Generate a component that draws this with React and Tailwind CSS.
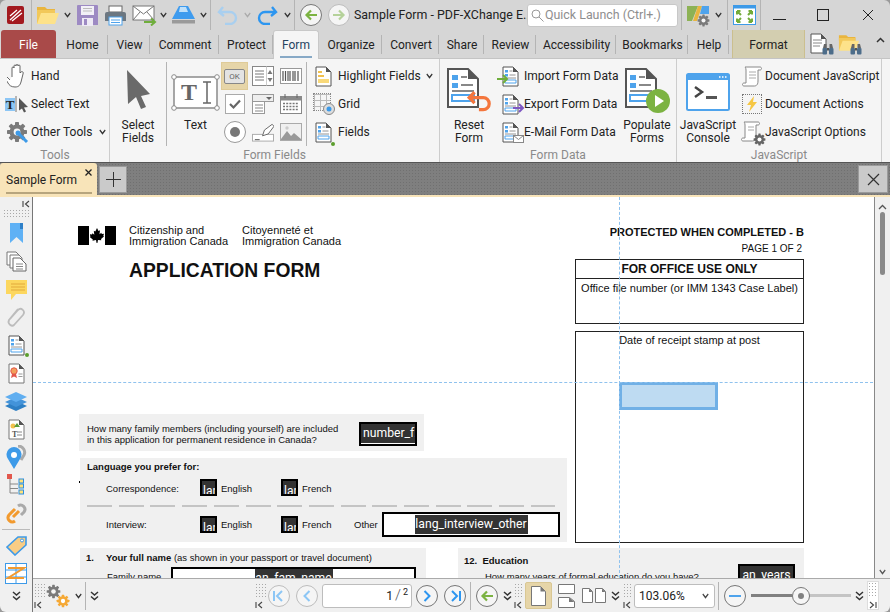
import React from "react";

const Chev = ({ c = "#333", w = 7, cls = "" }) => (
  <svg width={w} height="6" viewBox="0 0 9 6" preserveAspectRatio="none" className={"shrink-0 " + cls}><path d="M1 1l3.5 3.5L8 1" fill="none" stroke={c} strokeWidth="1.600" /></svg>
);
const DblChev = ({ cls = "" }) => (
  <svg width="9" height="10" viewBox="0 0 9 10" className={"shrink-0 " + cls}><path d="M1 1l3.5 3L8 1M1 5.5l3.5 3L8 5.5" fill="none" stroke="#333" strokeWidth="1.500" /></svg>
);
const Collapse = ({ flip = false }) => (
  <svg width="8" height="8" viewBox="0 0 8 8" style={flip ? { transform: "scaleX(-1)" } : undefined}><path d="M1 1v6M7 1L3.5 4 7 7" fill="none" stroke="#444" strokeWidth="1.100" /></svg>
);
const Dots = ({ cls = "" }) => (
  <div className={"bg-[radial-gradient(#a8a8a8_0.8px,transparent_0.9px)] bg-[length:3px_3px] " + cls} />
);
const VSep = ({ cls = "h-[26px]" }) => <div className={"w-px bg-[#b4b4b4] shrink-0 " + cls} />;

const Doc = ({ w = 17, h = 21, children, stroke = "#555" }) => (
  <svg width={w} height={h} viewBox="0 0 17 21">
    <path d="M1 1h10l5 5v14H1z" fill="#fff" stroke={stroke} strokeWidth="1" />
    <path d="M11 1v5h5z" fill="#555" />
    {children}
  </svg>
);
const FormLines = () => (
  <g>
    <path d="M3 4h3v2.5H3zM3 8h3v2.500H3z" fill="#4ea3ec" />
    <path d="M7.500 5h3M7.500 9h6M3 12h11" stroke="#888" strokeWidth="0.900" />
    <path d="M3 14h11v3H3z" fill="#fff" stroke="#4ea3ec" strokeWidth="1" />
  </g>
);

const Folder = ({ w = 24, h = 20 }) => (
  <svg width={w} height={h} viewBox="0 0 24 20" className="shrink-0">
    <path d="M1 2h8l2 2h8v4H1z" fill="#e9b53f" />
    <path d="M1 19V5h18v3" fill="#f2c85a" />
    <path d="M1 19L5 8h18l-4 11z" fill="#fde28a" />
  </svg>
);
const Gear = ({ s = 22, c = "#7a7a7a", hole = "#f5f5f5" }) => (
  <svg width={s} height={s} viewBox="0 0 22 22">
    <g fill={c}>
      {[0, 45, 90, 135].map((a) => <rect key={a} x="9" y="1" width="4" height="20" rx="0.700" transform={`rotate(${a} 11 11)`} />)}
      <circle cx="11" cy="11" r="7.500" />
    </g>
    <circle cx="11" cy="11" r="3.400" fill={hole} />
  </svg>
);
const Binoc = () => (
  <svg width="12" height="12" viewBox="0 0 12 12" className="absolute right-0 bottom-0">
    <path d="M1 5l1-4h2.500v4zM7.500 1H10l1 4H7.500z" fill="#666" />
    <rect x="0.500" y="5" width="4.500" height="6.500" rx="1" fill="#4d6d8a" />
    <rect x="7" y="5" width="4.500" height="6.500" rx="1" fill="#4d6d8a" />
    <rect x="5" y="5" width="2" height="2.500" fill="#555" />
  </svg>
);

const Circ = ({ children, off = false, s = 22 }) => (
  <div style={{ width: s, height: s }} className={"rounded-full border shrink-0 flex items-center justify-center bg-[#f5f5f5] " + (off ? "border-[#bdbdbd]" : "border-[#777]")}>{children}</div>
);
const ArrowL = ({ c }) => (
  <svg width="14" height="12" viewBox="0 0 14 12"><path d="M13 6H3M7 1.500L2.500 6 7 10.500" fill="none" stroke={c} strokeWidth="2.200" /></svg>
);
const ArrowR = ({ c }) => (
  <svg width="14" height="12" viewBox="0 0 14 12"><path d="M1 6h10M7 1.500L11.500 6 7 10.500" fill="none" stroke={c} strokeWidth="2.200" /></svg>
);

function TitleBar() {
  return (
    <div className="h-[30px] flex items-center bg-[#d6d6d6] rounded-t-[6px] text-[12.400px] text-[#222]">
      <div className="w-[31px] pl-[7px] shrink-0">
        <svg width="17" height="18" viewBox="0 0 17 18">
          <rect width="17" height="18" rx="2" fill="#a3191f" />
          <path d="M3 14L14 4M5 15L15 7M3 10l7-6" stroke="#fff" strokeWidth="1.300" />
        </svg>
      </div>
      <VSep cls="h-[30px]" />
      <div className="ml-[4px] shrink-0"><Folder /></div>
      <Chev cls="ml-[4px]" />
      <svg className="ml-[5px] shrink-0" width="23" height="22" viewBox="0 0 23 22">
        <path d="M1 2a1 1 0 011-1h19a1 1 0 011 1v19H1z" fill="#9d8ac3" />
        <rect x="5" y="2" width="13" height="9" fill="#f2f0f7" />
        <path d="M7 4.500h9M7 7h9" stroke="#bbb" />
        <rect x="6" y="14" width="11" height="8" fill="#eeeaf5" />
        <rect x="8" y="15" width="3" height="6" fill="#9d8ac3" />
      </svg>
      <svg className="ml-[5px] shrink-0" width="23" height="21" viewBox="0 0 23 21">
        <rect x="5" y="1" width="13" height="6" fill="#fff" stroke="#666" />
        <path d="M1 9a2 2 0 012-2h17a2 2 0 012 2v7H1z" fill="#6c7781" />
        <rect x="5" y="12" width="13" height="8" fill="#fff" stroke="#4ea3ec" />
        <path d="M7 15h9M7 17.500h9" stroke="#4ea3ec" />
      </svg>
      <svg className="ml-[5px] shrink-0" width="25" height="21" viewBox="0 0 25 21">
        <rect x="1" y="1" width="21" height="14" fill="#fff" stroke="#777" />
        <path d="M1 1l10.500 8L22 1M1 15l7-8M22 15l-7-8" fill="none" stroke="#777" />
        <path d="M12 17h10M19 13.500l4 3.500-4 3.500" fill="none" stroke="#6fae3c" strokeWidth="2" />
      </svg>
      <Chev cls="ml-[3px]" />
      <svg className="ml-[4px] shrink-0" width="25" height="20" viewBox="0 0 25 20">
        <path d="M8 1h9l7 13H1z" fill="#3e9bee" />
        <path d="M9 2h6l2 5H8z" fill="#bfe0fa" />
        <rect x="1" y="15" width="23" height="3.500" fill="#9a9a9a" />
      </svg>
      <Chev cls="ml-[4px]" />
      <VSep cls="h-[30px] ml-[3px]" />
      <svg className="ml-[6px] shrink-0" width="21" height="19" viewBox="0 0 21 19"><path d="M6 1L2 6l5 4M2.500 6H13a6 6 0 010 12H8" fill="none" stroke="#a9cfef" strokeWidth="2.400" /></svg>
      <Chev c="#aaa" cls="ml-[6px]" />
      <svg className="ml-[6px] shrink-0" width="21" height="19" viewBox="0 0 21 19"><path d="M15 1l4 5-5 4M18.500 6H8a6 6 0 000 12h5" fill="none" stroke="#2d96f0" strokeWidth="2.400" /></svg>
      <Chev cls="ml-[6px]" />
      <VSep cls="h-[30px] ml-[3px]" />
      <div className="ml-[5px]"><Circ><ArrowL c="#7cb342" /></Circ></div>
      <div className="ml-[6px]"><Circ off><ArrowR c="#b5d29a" /></Circ></div>
      <span className="ml-[4px] w-[173px] shrink-0 whitespace-nowrap">Sample Form - PDF-XChange E..</span>
      <div className="w-[151px] h-[23px] bg-white border border-[#c8c8c8] rounded-[3px] flex items-center pl-[3px] text-[#8e8e8e] shrink-0">
        <svg width="13" height="13" viewBox="0 0 13 13"><circle cx="5" cy="5" r="4" fill="none" stroke="#999" /><path d="M8 8l4.500 4.500" stroke="#999" /></svg>
        <span className="ml-[1px] whitespace-nowrap">Quick Launch (Ctrl+.)</span>
      </div>
      <VSep cls="h-[30px] ml-[3px]" />
      <svg className="ml-[4px] shrink-0" width="24" height="24" viewBox="0 0 24 24">
        <path d="M1 3h11L6 18H1z" fill="#8db255" />
        <path d="M12 3h4l-5 15H7z" fill="#e9b53f" />
        <path d="M16 3h7v8L14 11z" fill="#4ea3ec" />
        <g transform="translate(11 11)"><Gear s={13} /></g>
      </svg>
      <Chev cls="ml-[5px]" />
      <VSep cls="h-[30px] ml-[5px]" />
      <svg className="ml-[5px] shrink-0" width="23" height="20" viewBox="0 0 23 20">
        <rect x="0.500" y="0.500" width="22" height="19" fill="#fff" stroke="#3d9ae8" />
        <rect x="0.500" y="0.500" width="22" height="3" fill="#3d9ae8" />
        <path d="M4 6l4 4M4 6h3.500M4 6v3.500M19 6l-4 4M19 6h-3.500M19 6v3.500M4 17l4-4M4 17h3.500M4 17v-3.500M19 17l-4-4M19 17h-3.500M19 17v-3.500" fill="none" stroke="#73ab3a" strokeWidth="2" />
      </svg>
      <VSep cls="h-[30px] ml-[4px]" />
      <div className="flex-1 flex items-center">
        <div className="ml-[12px] w-[13px] h-px bg-[#222] mt-[8px]" />
        <div className="ml-[31px] w-[12px] h-[12px] border border-[#222]" />
        <svg className="ml-[33px]" width="12" height="12" viewBox="0 0 12 12"><path d="M1 1l10 10M11 1L1 11" stroke="#222" /></svg>
      </div>
    </div>
  );
}

const tabs = [["Home", 52], ["View", 42], ["Comment", 69], ["Protect", 54]];
const tabs2 = [["Organize", 63], ["Convert", 57], ["Share", 45], ["Review", 52], ["Accessibility", 80], ["Bookmarks", 72], ["Help", 41]];
const Tab = ({ t, w }) => (
  <div style={{ width: w }} className="h-[19px] flex items-center justify-center pl-[2px] border-r border-[#b4b4b4] shrink-0 mb-[4px]">{t}</div>
);

function TabRow() {
  return (
    <div className="h-[29px] flex items-end bg-[#d6d6d6] text-[12px] text-[#222] border-b border-[#c4c4c4]">
      <div className="ml-[1px] w-[55px] h-[28px] bg-[#a94a49] rounded-t-[3px] text-white flex items-center justify-center pt-[1px] shrink-0">File</div>
      {tabs.map(([t, w]) => <Tab key={t} t={t} w={w} />)}
      <div className="w-[46px] h-[29px] -mb-px bg-[#f5f5f5] border border-b-0 border-[#c8c8c8] rounded-t-[3px] flex flex-col items-center justify-center relative shrink-0 text-[#26435f]">
        <span>Form</span>
        <div className="absolute bottom-[1px] left-[6px] right-[6px] h-[2px] bg-[#87a9c6]" />
      </div>
      {tabs2.map(([t, w]) => <Tab key={t} t={t} w={w} />)}
      <div className="ml-[3px] w-[73px] h-[28px] bg-[#d3ceb0] border-x border-[#cbbf8e] flex items-center justify-center pt-[1px] shrink-0">Format</div>
      <div className="relative ml-[5px] w-[24px] h-[22px] mb-[3px] shrink-0"><Doc><path d="M3 7h9M3 10h9M3 13h7" stroke="#888" /></Doc><Binoc /></div>
      <div className="relative ml-[4px] w-[24px] h-[22px] mb-[3px] shrink-0"><Folder w={22} h={19} /><Binoc /></div>
      <svg className="ml-[14px] mb-[15px]" width="9" height="6" viewBox="0 0 9 6"><path d="M1 5l3.500-3.500L8 5" fill="none" stroke="#333" strokeWidth="1.500" /></svg>
    </div>
  );
}

const Row = ({ icon, label, extra, iw = "w-[28px]", cls = "" }) => (
  <div className={"h-[28px] flex items-center whitespace-nowrap " + cls}>
    <div className={"flex items-center justify-center shrink-0 " + iw}>{icon}</div>
    <span>{label}</span>
    {extra}
  </div>
);
const Big = ({ w, lines, icon, cls = "" }) => (
  <div style={{ width: w }} className={"flex flex-col items-center shrink-0 " + cls}>
    <div className="h-[57px] flex items-center justify-center">{icon}</div>
    {lines.map((l) => <span key={l} className="leading-[13px] whitespace-nowrap">{l}</span>)}
  </div>
);
const Group = ({ w, cap, children }) => (
  <div style={{ width: w }} className="h-[103px] flex flex-col border-r border-[#cdcdcd] shrink-0">
    <div className="h-[88px] flex pt-[3px]">{children}</div>
    <div className="flex-1 text-center text-[#8a8a8a] leading-[14px] pt-[1px]">{cap}</div>
  </div>
);
const Cell = ({ children, cls = "" }) => <div className={"h-[28px] flex items-center justify-center " + cls}>{children}</div>;

function Ribbon() {
  return (
    <div className="h-[103px] bg-[#f5f5f5] flex text-[12px] text-[#222] pl-[1px]">
      <Group w={109} cap="Tools">
        <div className="flex flex-col pl-[2px]">
          <Row iw="w-[28px]" label="Hand" icon={
            <svg width="20" height="24" viewBox="0 0 20 24"><path d="M5 13V4a1 1 0 012 0V2a1 1 0 012 0v-.5a1 1 0 012 0V2a1 1 0 012 0v7l1-1c1-1 3 0 2 2l-2 8c-1 3-2 5-6 5s-6-2-7-4l-3-5c-.5-1 1-2 2-1l3 3" fill="#fff" stroke="#555" strokeWidth="0.900" /></svg>
          } />
          <Row label="Select Text" icon={
            <div className="flex items-center">
              <span className="w-[10px] h-[13px] bg-[#8cc6f5] font-['Liberation_Serif',serif] font-bold text-[13px] leading-[13px] text-center">T</span>
              <svg width="14" height="18" viewBox="0 0 14 18"><path d="M1 1v16" stroke="#777" /><path d="M4 3l9 9-4 .5 2 4-2 1-2-4-3 2z" fill="#555" /></svg>
            </div>
          } />
          <Row label="Other Tools" icon={
            <div className="relative w-[22px] h-[22px]"><Gear />
              <svg width="15" height="15" viewBox="0 0 15 15" className="absolute right-[-2px] bottom-[-2px]"><path d="M2 2l10 10" stroke="#3d9ae8" strokeWidth="3" /><circle cx="3" cy="3" r="2.500" fill="#3d9ae8" /></svg>
            </div>
          } extra={<Chev cls="ml-[7px]" />} />
        </div>
      </Group>
      <Group w={330} cap="Form Fields">
        <Big w={56} lines={["Select", "Fields"]} icon={
          <svg className="-mt-[2px]" width="25" height="41" viewBox="0 0 25 41"><path d="M1 1l23 24-9 2 5 11-5 2-5-12-8 7z" fill="#6a6a6a" /></svg>
        } />
        <VSep cls="h-[84px]" />
        <Big w={55} lines={["Text"]} cls="pl-[2px]" icon={
          <svg className="mt-[3px]" width="49" height="37" viewBox="0 0 49 37">
            <rect x="3" y="3" width="43" height="31" fill="#fff" stroke="#8a8a8a" strokeWidth="1.500" />
            {[[3, 3], [46, 3], [3, 34], [46, 34]].map(([x, y]) => <circle key={x + "-" + y} cx={x} cy={y} r="2.300" fill="#fff" stroke="#8a8a8a" />)}
            <text x="18" y="26" textAnchor="middle" fontFamily="Liberation Serif" fontWeight="700" fontSize="24" fill="#666">T</text>
            <path d="M32 8h8M32 29h8M36 8v21" stroke="#666" strokeWidth="1.500" />
          </svg>
        } />
        <div className="flex flex-col w-[31px] -ml-px">
          <div className="h-[28px] w-[27px] bg-[#e6d5a8] flex items-center justify-center border border-[#dfcb98]">
            <div className="w-[21px] h-[15px] bg-[#e3e3e3] border border-[#888] rounded-[2px] text-[8px] leading-[13px] text-center text-[#666]">OK</div>
          </div>
          <Cell cls="w-[27px] h-[28px]">
            <svg width="20" height="20" viewBox="0 0 20 20"><rect x="0.500" y="0.500" width="19" height="19" fill="#fff" stroke="#aaa" /><path d="M5 10l3.500 3.500L15 6.500" fill="none" stroke="#666" strokeWidth="2.200" /></svg>
          </Cell>
          <Cell cls="w-[27px]">
            <svg width="22" height="22" viewBox="0 0 22 22"><circle cx="11" cy="11" r="10.500" fill="#fff" stroke="#999" /><circle cx="11" cy="11" r="5" fill="#777" /></svg>
          </Cell>
        </div>
        <div className="flex flex-col w-[28px]">
          <Cell cls="w-[22px]">
            <svg width="22" height="20" viewBox="0 0 22 20"><rect x="0.500" y="0.500" width="21" height="19" fill="#fff" stroke="#888" /><path d="M3 5h9M3 8h9M3 11h9M3 14h9" stroke="#777" /><path d="M14.500 .5v19" stroke="#ccc" /><path d="M15.500 8l2.500-4 2.500 4zM15.500 12l2.500 4 2.500-4z" fill="#777" /></svg>
          </Cell>
          <Cell cls="w-[22px]">
            <svg width="22" height="20" viewBox="0 0 22 20"><rect x="0.500" y="0.500" width="21" height="7" fill="#eee" stroke="#999" /><path d="M14 3l3 3 3-3z" fill="#666" /><rect x="0.500" y="7.500" width="12" height="12" fill="#fff" stroke="#999" /><path d="M3 11h8M3 14h8M3 17h8" stroke="#888" /></svg>
          </Cell>
          <Cell cls="w-[22px]">
            <svg width="23" height="20" viewBox="0 0 23 20"><rect x="0.500" y="12.500" width="22" height="7" fill="#fff" stroke="#aaa" /><path d="M3 18h5" stroke="#555" /><path d="M11 14l2-6 8-6 2 2-6 8z" fill="#fff" stroke="#666" /></svg>
          </Cell>
        </div>
        <div className="flex flex-col w-[26px]">
          <Cell cls="w-[22px]">
            <svg width="22" height="16" viewBox="0 0 22 16"><rect x="0.500" y="0.500" width="21" height="15" fill="#fff" stroke="#999" /><path d="M3 3v10M5.500 3v10M8 3v10M10 3v10M13 3v10M15 3v10M18 3v10" stroke="#555" strokeWidth="1.200" /></svg>
          </Cell>
          <Cell cls="w-[22px]">
            <svg width="22" height="20" viewBox="0 0 22 20"><rect x="0.500" y="2.500" width="21" height="17" fill="#fff" stroke="#888" /><rect x="0.500" y="2.500" width="21" height="4" fill="#8a8a8a" /><path d="M5 0v4M17 0v4" stroke="#666" /><path d="M3 9.500h16M3 12.500h16M3 15.500h16" stroke="#777" strokeDasharray="2 1.200" strokeWidth="1.500" /></svg>
          </Cell>
          <Cell cls="w-[22px]">
            <svg width="22" height="18" viewBox="0 0 22 18"><rect x="0.500" y="0.500" width="21" height="17" fill="#f0f0f0" stroke="#aaa" /><path d="M1 16l6-8 4 5 3-3 7 6v1H1z" fill="#999" /><circle cx="7" cy="5" r="1.700" fill="#ccc" /></svg>
          </Cell>
        </div>
        <VSep cls="h-[84px]" />
        <div className="flex flex-col pl-[2px] w-[130px]">
          <Row label="Highlight Fields" iw="w-[29px]" icon={<Doc><path d="M3 5h4v2H3zM3 9h6v2H3z" fill="#f2c14e" /><path d="M3 13h11v4H3z" fill="#f9d979" /></Doc>} extra={<Chev cls="ml-[5px]" />} />
          <Row label="Grid" iw="w-[29px]" icon={
            <div className="relative w-[22px] h-[22px]">
              <div className="w-[18px] h-[18px] border border-dotted border-[#888] bg-[linear-gradient(#bbb_1px,transparent_1px),linear-gradient(90deg,#bbb_1px,transparent_1px)] bg-[length:6px_6px]" />
              <svg width="12" height="12" viewBox="0 0 12 12" className="absolute right-0 bottom-0"><circle cx="6" cy="6" r="5.500" fill="#ddd" stroke="#888" /><circle cx="6" cy="6" r="2.500" fill="#3d9ae8" /></svg>
            </div>
          } />
          <Row label="Fields" iw="w-[29px]" icon={
            <div className="relative"><Doc><FormLines /></Doc><div className="absolute right-[-3px] bottom-[-3px] w-[4px] h-[4px] rounded-full bg-[#5b9e2d]" /></div>
          } />
        </div>
      </Group>
      <Group w={237} cap="Form Data">
        <Big w={58} lines={["Reset", "Form"]} icon={
          <div className="relative w-[46px] h-[46px] -mt-[1px]">
            <Doc w={34} h={42}><FormLines /></Doc>
            <svg width="26" height="22" viewBox="0 0 24 20" className="absolute right-[-1px] bottom-0"><path d="M7 1L2 6l5 5M3 6h12a5 5 0 010 11h-4" fill="none" stroke="#f4763d" strokeWidth="3" /></svg>
          </div>
        } />
        <div className="flex flex-col w-[125px] -ml-[1px]">
          <Row label="Import Form Data" iw="w-[27px]" icon={<div className="relative"><Doc><FormLines /></Doc><svg width="12" height="10" viewBox="0 0 12 10" className="absolute left-[-5px] bottom-[3px]"><path d="M0 5h9M6 1l4 4-4 4" fill="none" stroke="#6fae3c" strokeWidth="2" /></svg></div>} />
          <Row label="Export Form Data" iw="w-[27px]" icon={<div className="relative"><Doc><FormLines /></Doc><svg width="12" height="10" viewBox="0 0 12 10" className="absolute right-[-6px] bottom-[2px]"><path d="M0 5h9M6 1l4 4-4 4" fill="none" stroke="#7e57c2" strokeWidth="2" /></svg></div>} />
          <Row label="E-Mail Form Data" iw="w-[27px]" icon={<div className="relative"><Doc><FormLines /></Doc><svg width="11" height="8" viewBox="0 0 11 8" className="absolute right-[-5px] bottom-0"><rect x="0.500" y="0.500" width="10" height="7" fill="#fff" stroke="#888" /><path d="M.5.5l5 4 5-4" fill="none" stroke="#888" /></svg></div>} />
        </div>
        <Big w={50} lines={["Populate", "Forms"]} icon={
          <div className="relative w-[46px] h-[46px] -mt-[1px]">
            <Doc w={34} h={42}><FormLines /></Doc>
            <svg width="24" height="24" viewBox="0 0 24 24" className="absolute right-0 bottom-0"><circle cx="12" cy="12" r="12" fill="#7cb342" /><path d="M9 6l9 6-9 6z" fill="#fff" /></svg>
          </div>
        } />
      </Group>
      <Group w={205} cap="JavaScript">
        <Big w={62} lines={["JavaScript", "Console"]} icon={
          <svg className="mt-[2px]" width="44" height="38" viewBox="0 0 44 38">
            <rect x="1" y="1" width="42" height="36" rx="1.500" fill="#fff" stroke="#4ea3ec" strokeWidth="2" />
            <rect x="1" y="1" width="42" height="6" fill="#4ea3ec" />
            <path d="M33 4h1.500M36 4h1.500M39 4h1.500" stroke="#fff" strokeWidth="1.500" />
            <path d="M9 14l7 5-7 5" fill="none" stroke="#444" strokeWidth="2.500" />
            <path d="M20 24.500h11" stroke="#555" strokeWidth="3" />
          </svg>
        } />
        <div className="flex flex-col">
          <Row label="Document JavaScript" iw="w-[26px]" icon={
            <svg width="22" height="21" viewBox="0 0 22 21"><path d="M4 1h15c2 0 2 3 0 3h-2v11c0 5-3 5-4 5H3c-2 0-2-3 0-3h2V4C5 2 4 1 4 1z" fill="#fff" stroke="#888" /><path d="M8 6h7M8 9h7M8 12h7" stroke="#aaa" /></svg>
          } />
          <Row label="Document Actions" iw="w-[26px]" icon={
            <div className="w-[20px] h-[20px] border border-dotted border-[#777] flex items-center justify-center">
              <svg width="12" height="16" viewBox="0 0 12 16"><path d="M8 0L1 9h4l-2 7 8-10H7z" fill="#f6c744" /></svg>
            </div>
          } />
          <Row label="JavaScript Options" iw="w-[26px]" icon={
            <div className="relative w-[22px] h-[22px]">
              <svg width="20" height="21" viewBox="0 0 20 21"><path d="M3 1h14c2 0 2 3 0 3h-2v11c0 5-3 5-4 5H2c-2 0-2-3 0-3h2V4C4 2 3 1 3 1z" fill="#fff" stroke="#888" /><path d="M7 6h6M7 9h6" stroke="#aaa" /></svg>
              <div className="absolute right-[-3px] bottom-[-3px]"><Gear s={13} c="#666" hole="#fff" /></div>
            </div>
          } />
        </div>
      </Group>
    </div>
  );
}

function DocTabs() {
  return (
    <div className="h-[33px] flex items-start bg-[#7f7f7f] border-t border-[#555] bg-[radial-gradient(#707070_0.7px,transparent_0.8px)] bg-[length:3px_3px] text-[12px]">
      <div className="relative w-[97px] h-[32px] bg-[#f8e4b9] rounded-t-[3px] flex items-start pl-[6px] pt-[8px] text-[#222] shrink-0">
        <span>Sample Form</span>
        <svg width="7" height="7" viewBox="0 0 7 7" className="absolute right-[5px] top-[6px]"><path d="M.5.5l6 6M6.500.5l-6 6" stroke="#222" strokeWidth="1.300" /></svg>
        <div className="absolute left-[6px] right-[5px] bottom-[1px] h-[2px] bg-[#b7a57e]" />
      </div>
      <div className="ml-[2px] mt-[3px] w-[28px] h-[27px] bg-[#cacaca] border border-[#9b9b9b] flex items-center justify-center">
        <svg width="15" height="15" viewBox="0 0 15 15"><path d="M7.500 0v15M0 7.500h15" stroke="#333" /></svg>
      </div>
      <div className="flex-1" />
      <div className="mr-[2px] mt-[2px] w-[30px] h-[28px] bg-[#cacaca] border border-[#9b9b9b] flex items-center justify-center">
        <svg width="13" height="13" viewBox="0 0 13 13"><path d="M1 1l11 11M12 1L1 12" stroke="#333" strokeWidth="1.200" /></svg>
      </div>
    </div>
  );
}

const sideIcons = [
  <svg width="15" height="20" viewBox="0 0 15 20"><path d="M1 0h13v20l-6.500-6L1 20z" fill="#5fb1f5" /><path d="M11 0h3v6h-3z" fill="#2e80c8" /></svg>,
  <svg width="21" height="21" viewBox="0 0 21 21"><path d="M1 1h9l3 3v10H1z" fill="#fff" stroke="#777" /><path d="M4 4h9l3 3v10H4z" fill="#fff" stroke="#777" /><path d="M7 7h7l6 6v7H7z" fill="#fff" stroke="#666" /><path d="M10 13h7M10 15.500h7M10 18h7" stroke="#888" /></svg>,
  <svg width="22" height="21" viewBox="0 0 22 21"><path d="M1 1h21v14H11l-5 6v-6H1z" fill="#fcd75f" /><path d="M6 5h14M6 8h14M6 11h14" stroke="#e2a93c" /></svg>,
  <svg width="23" height="22" viewBox="0 0 23 22"><path d="M5 13l8-9c3-3 8 1 5 5l-9 10c-2 2-7-1-5-5l9-11" fill="none" stroke="#bcbcbc" strokeWidth="1.800" /></svg>,
  <div className="relative"><Doc><FormLines /></Doc><div className="absolute right-[-4px] bottom-[-1px] w-[4px] h-[4px] rounded-full bg-[#5b9e2d]" /></div>,
  <Doc stroke="#777"><circle cx="6" cy="8" r="3.200" fill="#f3a05a" stroke="#e2574c" /><path d="M4 11l-1 4 3-1.500L9 15l-1-4" fill="#e2574c" /><path d="M10.500 11h4M10.500 13.500h4" stroke="#999" /></Doc>,
  <svg width="22" height="19" viewBox="0 0 22 19"><path d="M11 9l11 5-11 5L0 14z" fill="#2e7fc4" /><path d="M11 5l11 5-11 5L0 10z" fill="#4393d9" /><path d="M11 0l11 5-11 5L0 5z" fill="#60aef0" /></svg>,
  <Doc stroke="#777"><circle cx="5" cy="7" r="2.500" fill="#f2c14e" /><path d="M6 8l3-4 3 4z" fill="#5d9c3a" /><text x="4" y="18" fontFamily="Liberation Serif" fontWeight="700" fontSize="8" fill="#555">T</text><path d="M9 13h5M9 16h5" stroke="#888" /></Doc>,
  <svg width="21" height="24" viewBox="0 0 21 24"><path d="M12 1c5 0 8 5 6 9l-3 5" fill="none" stroke="#aaa" strokeWidth="3" /><path d="M8 24L2 14a7.500 7.500 0 1112 0z" fill="#3d9ae8" /><circle cx="8" cy="10" r="3" fill="#fff" /></svg>,
  <svg width="18" height="22" viewBox="0 0 18 22"><rect x="0" y="0" width="5" height="5" fill="#e2574c" /><path d="M3 5v14h8M3 10h8M3 14.500h8" fill="none" stroke="#888" /><rect x="12" y="5" width="4.500" height="4" fill="#ffe17a" stroke="#2d8fe0" /><rect x="12" y="10" width="4.500" height="4" fill="#ffe17a" stroke="#2d8fe0" /><rect x="12" y="16" width="4.500" height="4" fill="#ffe17a" stroke="#2d8fe0" /></svg>,
  <svg width="23" height="21" viewBox="0 0 23 21"><path d="M13 3c4-3 9 2 6 6l-3 3" fill="none" stroke="#aaa" strokeWidth="3" /><path d="M10 18c-4 3-9-2-6-6l6-6M8 14l6-6" fill="none" stroke="#f29a2e" strokeWidth="3" /></svg>,
];

function Sidebar() {
  return (
    <div className="w-[33px] shrink-0 bg-[#f0f0f0] border-r border-[#777] flex flex-col items-center rounded-bl-[6px]">
      <div className="h-[12px] w-full flex justify-end items-center pr-[2px] pt-[2px]"><Collapse /></div>
      <Dots cls="w-[26px] h-[10px]" />
      {sideIcons.map((ic, i) => <div key={i} className="h-[28px] flex items-center justify-center shrink-0">{ic}</div>)}
      <div className="w-[28px] h-px bg-[#bbb] mt-[2px] mb-[1px] shrink-0" />
      <div className="h-[28px] flex items-center justify-center shrink-0">
        <svg width="21" height="21" viewBox="0 0 21 21"><path d="M1 12L12 2h8v8L9 20z" fill="#f9cd85" stroke="#3d9ae8" strokeWidth="1.600" /><circle cx="16" cy="5.500" r="1.500" fill="#fff" stroke="#3d9ae8" /></svg>
      </div>
      <div className="h-[21px] flex items-start justify-center mt-[4px] shrink-0">
        <svg width="22" height="21" viewBox="0 0 22 21"><rect x="0.500" y="0.500" width="21" height="20" fill="#fff" stroke="#3d9ae8" /><path d="M11 .5v20M.5 7h21M.5 14h21" stroke="#3d9ae8" /><path d="M3 5h16L3 15h16" fill="none" stroke="#f29a2e" strokeWidth="2" /></svg>
      </div>
      <DblChev cls="mt-[7px]" />
    </div>
  );
}

const Check = ({ x, y }) => (
  <div style={{ left: x, top: y }} className="absolute w-[17px] h-[17px] bg-[#333] border-[2px] border-black overflow-hidden">
    <span className="absolute left-[1px] top-[3px] font-['Roboto',sans-serif] text-[12px] leading-[14px] text-white whitespace-nowrap">lan</span>
  </div>
);
const T = ({ x, y, children, cls = "" }) => (
  <div style={{ left: x, top: y }} className={"absolute whitespace-nowrap leading-none " + cls}>{children}</div>
);

function PageCanvas() {
  return (
    <div className="absolute -left-[33px] -top-[197px] w-[890px] h-[612px] font-['Liberation_Sans',Arial,sans-serif] text-[#111]">
      <div className="absolute left-[78px] top-[226px] w-[38px] h-[19px] flex justify-between items-center">
        <div className="w-[11px] h-[19px] bg-black" />
        <svg width="14" height="15" viewBox="0 0 14 15"><path d="M7 0l1.500 3 1.500-.7-.5 4 1.800-1.500.5 1.300 2.200-.3-.7 2.200.7.500-3 2.500.3 1.200L8 12l-.6 3h-.8L6 12l-3.500.700.300-1.200-3-2.500.7-.5L-.2 6.300 2 6.600l.500-1.300L4.300 6.800l-.5-4 1.500.7z" fill="#000" /></svg>
        <div className="w-[11px] h-[19px] bg-black" />
      </div>
      <div className="absolute left-[129px] top-[225px] text-[11px] leading-[11px]">Citizenship and<br />Immigration Canada</div>
      <div className="absolute left-[242px] top-[225px] text-[11px] leading-[11px]">Citoyenneté et<br />Immigration Canada</div>
      <T x={129} y={261} cls="text-[19.300px] font-bold">APPLICATION FORM</T>
      <div className="absolute right-[86px] top-[224px] text-[11px] font-bold whitespace-nowrap">PROTECTED WHEN COMPLETED - B</div>
      <div className="absolute right-[88px] top-[241px] text-[10px] whitespace-nowrap">PAGE 1 OF 2</div>

      <div className="absolute left-[575px] top-[259px] w-[229px] h-[65px] border-[1.500px] border-[#222] flex flex-col items-center">
        <div className="h-[19px] w-full border-b-[1.500px] border-[#222] text-center text-[12px] font-bold leading-[18px]">FOR OFFICE USE ONLY</div>
        <div className="text-[11px] mt-px whitespace-nowrap">Office file number (or IMM 1343 Case Label)</div>
      </div>
      <div className="absolute left-[575px] top-[331px] w-[229px] h-[212px] border border-[#222] text-center text-[11px]">Date of receipt stamp at post</div>
      <div className="absolute left-[619px] top-[382px] w-[99px] h-[28px] bg-[#bedbf2] border-[3px] border-[#71b0e6]" />

      <div className="absolute left-[79px] top-[414px] w-[345px] h-[37px] bg-[#f0f0f0]" />
      <div className="absolute left-[87px] top-[423px] text-[9.500px] leading-[11px]">How many family members (including yourself) are included<br />in this application for permanent residence in Canada?</div>
      <div className="absolute left-[359px] top-[422px] w-[58px] h-[24px] bg-[#333] border-[2px] border-black overflow-hidden">
        <div className="font-['Roboto',sans-serif] text-[12.200px] leading-[19px] text-white pl-[2px] whitespace-nowrap">number_f.</div>
        <div className="absolute left-0 right-0 bottom-0 h-[1.500px] bg-white" />
      </div>

      <div className="absolute left-[80px] top-[458px] w-[487px] h-[84px] bg-[#f0f0f0]" />
      <div className="absolute left-[79px] top-[481px] w-px h-[2px] bg-black" />
      <T x={87} y={462} cls="text-[9.500px] font-bold">Language you prefer for:</T>
      <T x={106} y={484} cls="text-[9.500px]">Correspondence:</T>
      <Check x={200} y={479} /><T x={221} y={484} cls="text-[9.500px]">English</T>
      <Check x={281} y={479} /><T x={302} y={484} cls="text-[9.500px]">French</T>
      <div className="absolute left-[87px] top-[505px] w-[468px] h-[2px] bg-[repeating-linear-gradient(90deg,#c4c4c4_0,#c4c4c4_25px,transparent_25px,transparent_31.700px)]" />
      <T x={106} y={520} cls="text-[9.500px]">Interview:</T>
      <Check x={200} y={516} /><T x={221} y={520} cls="text-[9.500px]">English</T>
      <Check x={281} y={516} /><T x={302} y={520} cls="text-[9.500px]">French</T>
      <T x={354} y={520} cls="text-[9.500px]">Other</T>
      <div className="absolute left-[382px] top-[512px] w-[178px] h-[25px] bg-white border-[2px] border-black flex justify-center items-center">
        <div className="bg-[#333] text-white font-['Roboto',sans-serif] text-[12.200px] leading-[19px] w-[113px] text-center whitespace-nowrap">lang_interview_other</div>
      </div>

      <div className="absolute left-[80px] top-[548px] w-[346px] h-[40px] bg-[#f0f0f0]" />
      <T x={86} y={553} cls="text-[9.500px] font-bold">1.</T>
      <T x={106} y={553} cls="text-[9.500px]"><b>Your full name</b> (as shown in your passport or travel document)</T>
      <T x={107} y={572} cls="text-[9.500px]">Family name</T>
      <div className="absolute left-[171px] top-[567px] w-[245px] h-[24px] bg-white border-[2px] border-black flex justify-center">
        <div className="bg-[#333] text-white font-['Roboto',sans-serif] text-[12.200px] leading-[19px] w-[78px] text-center whitespace-nowrap">an_fam_name</div>
      </div>
      <div className="absolute left-[458px] top-[548px] w-[346px] h-[40px] bg-[#f0f0f0]" />
      <T x={464} y={556} cls="text-[9.500px] font-bold">12.&nbsp; Education</T>
      <T x={485} y={572} cls="text-[9.500px]">How many years of formal education do you have?</T>
      <div className="absolute left-[738px] top-[564px] w-[57px] h-[24px] bg-[#333] border-[2px] border-black">
        <div className="text-white font-['Roboto',sans-serif] text-[12.200px] leading-[19px] text-center whitespace-nowrap">an_years</div>
      </div>

      <div className="absolute left-[33px] right-[17px] top-[382px] border-t border-dashed border-[#8fc2ee]" />
      <div className="absolute left-[619px] top-[197px] h-[381px] border-l border-dashed border-[#8fc2ee]" />
    </div>
  );
}

function Scrollbar() {
  return (
    <div className="w-[16px] shrink-0 bg-[#f0f0f0] border-l border-[#888] flex flex-col items-center">
      <svg className="mt-[7px]" width="9" height="6" viewBox="0 0 9 6"><path d="M1 5l3.500-3.500L8 5" fill="none" stroke="#555" strokeWidth="1.300" /></svg>
      <div className="mt-[2px] w-[5px] h-[63px] rounded-full bg-[#8a8a8a]" />
      <div className="flex-1" />
      <Chev c="#555" cls="mb-[3px]" />
    </div>
  );
}

function StatusBar() {
  return (
    <div className="h-[34px] bg-[#f0f0f0] flex items-center border-t border-[#aaa] rounded-br-[6px] text-[12px] text-[#222]">
      <div className="w-[11px] h-[26px] ml-px flex flex-col justify-between shrink-0"><Dots cls="h-[16px]" /><Collapse /></div>
      <div className="relative ml-px w-[24px] h-[24px] shrink-0">
        <Gear s={15} />
        <div className="absolute right-0 bottom-0"><Gear s={14} c="#f5a936" hole="#fff" /></div>
      </div>
      <Chev cls="ml-[5px]" />
      <VSep cls="h-[28px] ml-[3px]" />
      <DblChev cls="ml-[4px]" />
      <div className="w-[156px] shrink-0" />
      <div className="w-[11px] h-[26px] flex flex-col justify-between shrink-0"><Dots cls="h-[16px]" /><Collapse /></div>
      <div className="ml-[2px]"><Circ off><svg width="14" height="12" viewBox="0 0 14 12"><path d="M2 1v10M10 1L5 6l5 5" fill="none" stroke="#8cc6f5" strokeWidth="2" /></svg></Circ></div>
      <div className="ml-[6px]"><Circ off><svg width="8" height="12" viewBox="0 0 8 12"><path d="M6.500 1L1.500 6l5 5" fill="none" stroke="#8cc6f5" strokeWidth="2" /></svg></Circ></div>
      <div className="ml-[4px] w-[90px] h-[24px] bg-white border border-[#bdbdbd] rounded-[3px] flex items-center justify-end pr-[3px] shrink-0 text-[12px]">
        <span>1</span><span className="text-[15px] text-[#555] mx-[2px] font-light">/</span><span className="text-[9px] -mt-[6px]">2</span>
      </div>
      <div className="ml-[4px]"><Circ><svg width="8" height="12" viewBox="0 0 8 12"><path d="M1.500 1l5 5-5 5" fill="none" stroke="#2d96f0" strokeWidth="2" /></svg></Circ></div>
      <div className="ml-[6px]"><Circ><svg width="14" height="12" viewBox="0 0 14 12"><path d="M12 1v10M4 1l5 5-5 5" fill="none" stroke="#2d96f0" strokeWidth="2" /></svg></Circ></div>
      <VSep cls="h-[28px] ml-[4px]" />
      <div className="ml-[5px]"><Circ><ArrowL c="#7cb342" /></Circ></div>
      <DblChev cls="ml-[5px]" />
      <div className="w-[10px] h-[26px] ml-[2px] flex flex-col justify-between shrink-0"><Dots cls="h-[16px]" /><Collapse /></div>
      <div className="w-[27px] h-[27px] bg-[#e6d5a8] border border-[#d9c793] rounded-[2px] flex items-center justify-center ml-[1px] shrink-0">
        <svg width="15" height="20" viewBox="0 0 15 20"><path d="M.5.5h9l5 5v14H.5z" fill="#fff" stroke="#777" /><path d="M9.500.5v5h5z" fill="#777" /></svg>
      </div>
      <svg className="ml-[6px] shrink-0" width="17" height="24" viewBox="0 0 17 24"><path d="M.5.500h16v9H.5zM.5 13.500h11l5 4v6H.5z" fill="#fff" stroke="#777" /><path d="M11 13.500l5.500 4.500H11z" fill="#777" /></svg>
      <svg className="ml-[7px] shrink-0" width="24" height="15" viewBox="0 0 24 15"><path d="M.5.500h7l3 3v11H.5zM13.500.500h7l3 3v11h-10z" fill="#fff" stroke="#777" /><path d="M7 .5l3.500 3.500H7zM20 .5l3.500 3.500H20z" fill="#777" /></svg>
      <DblChev cls="ml-[5px]" />
      <div className="w-[10px] h-[26px] ml-[3px] flex flex-col justify-between shrink-0"><Dots cls="h-[16px]" /><Collapse /></div>
      <div className="ml-px w-[81px] h-[24px] bg-white border border-[#bdbdbd] rounded-[3px] flex items-center justify-between pl-[4px] pr-[5px] shrink-0">
        <span>103.06%</span><Chev c="#444" />
      </div>
      <VSep cls="h-[28px] ml-[3px]" />
      <div className="ml-[5px]"><Circ><div className="w-[12px] h-[2px] bg-[#4ea3ec]" /></Circ></div>
      <div className="relative ml-[5px] w-[100px] h-[18px] flex items-center shrink-0">
        <div className="w-[41px] h-[3px] bg-[#808080]" />
        <div className="flex-1 h-[3px] bg-[#c4c4c4]" />
        <div className="absolute left-[41px] top-0 w-[18px] h-[18px] rounded-full bg-[#f5f5f5] border border-[#777] flex items-center justify-center">
          <div className="w-[6px] h-[6px] rounded-full bg-[#808080]" />
        </div>
      </div>
      <DblChev cls="ml-[4px]" />
      <div className="w-[12px] h-[29px] ml-[3px] bg-white border border-[#ddd] flex flex-col justify-between items-center shrink-0"><Dots cls="h-[16px] w-full" /><Collapse flip /></div>
    </div>
  );
}

export default function App() {
  return (
    <div className="w-[890px] h-[612px] overflow-hidden bg-[#9a9a9a] font-['Roboto',sans-serif]">
      <TitleBar />
      <TabRow />
      <Ribbon />
      <DocTabs />
      <div className="h-[2px] bg-[#f8e4b9]" />
      <div className="h-[415px] flex">
        <Sidebar />
        <div className="flex-1 flex flex-col min-w-0">
          <div className="flex-1 flex min-h-0">
            <div className="flex-1 relative bg-white overflow-hidden">
              <PageCanvas />
            </div>
            <Scrollbar />
          </div>
          <StatusBar />
        </div>
      </div>
    </div>
  );
}
